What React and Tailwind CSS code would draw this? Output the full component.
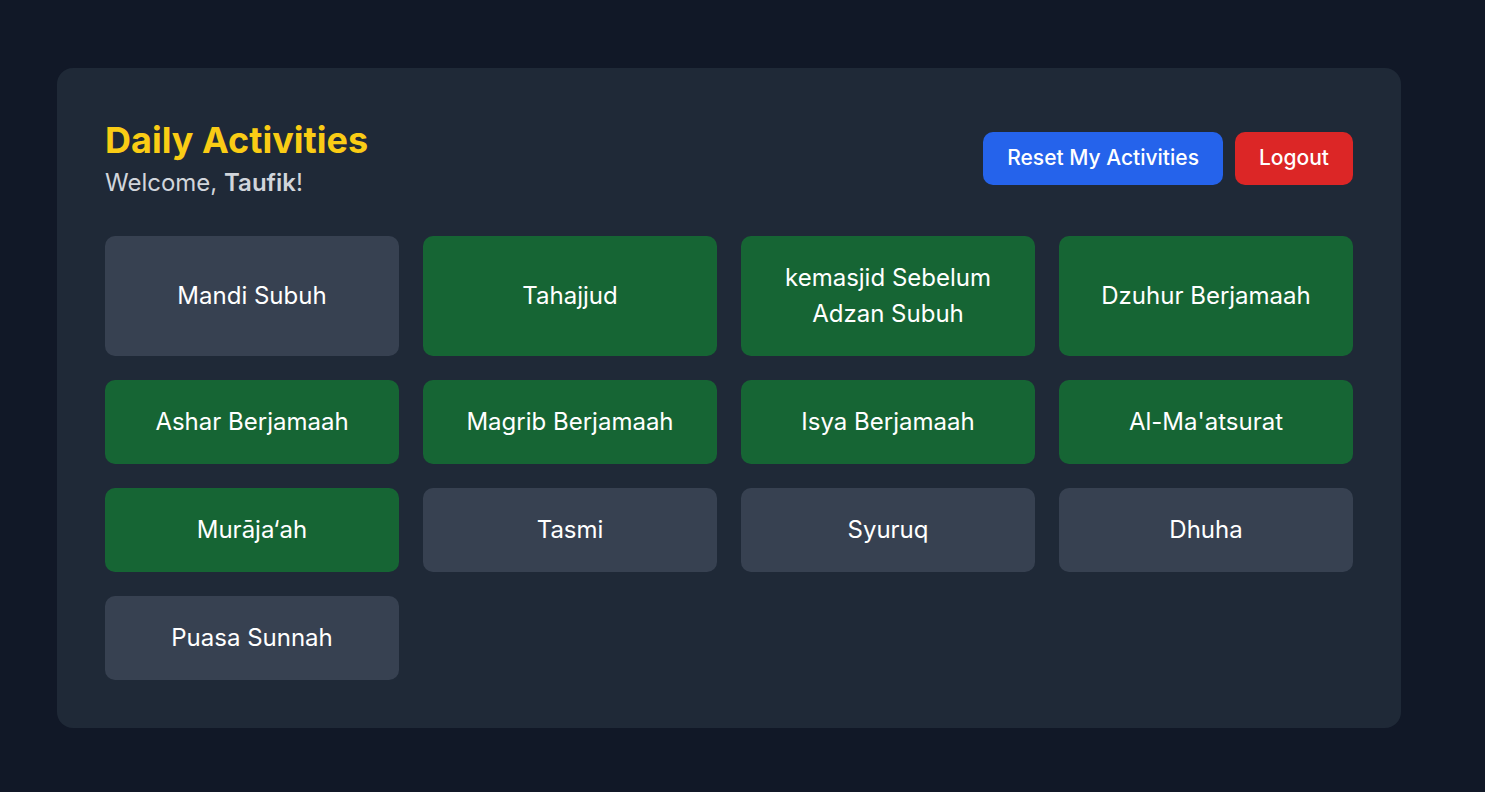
import React, { useState } from "react";

const ACTIVITIES = [
    { name: "Mandi Subuh", done: false },
    { name: "Tahajjud", done: true },
    { name: "kemasjid Sebelum Adzan Subuh", done: true },
    { name: "Dzuhur Berjamaah", done: true },
    { name: "Ashar Berjamaah", done: true },
    { name: "Magrib Berjamaah", done: true },
    { name: "Isya Berjamaah", done: true },
    { name: "Al-Ma'atsurat", done: true },
    { name: "Murāja‘ah", done: true },
    { name: "Tasmi", done: false },
    { name: "Syuruq", done: false },
    { name: "Dhuha", done: false },
    { name: "Puasa Sunnah", done: false },
];

export default function App() {
    const [items, setItems] = useState(ACTIVITIES);

    const toggle = (i) => {
        setItems(prev => prev.map((it, idx) => idx === i ? { ...it, done: !it.done } : it));
    };

    return (
        <div className="min-h-screen bg-[#111827] pl-[57px] pt-[68px] pb-16 font-['Inter','Liberation_Sans',sans-serif]">
            <div className="w-[1344px] bg-[#1f2937] rounded-2xl p-12">
                {/* header */}
                <div className="flex items-center justify-between mb-[36px]">
                    <div className="mt-[3px]">
                        <h1 className="text-[36px] leading-[43px] font-bold text-[#facc15]">Daily Activities</h1>
                        <p className="mt-1 text-[24px] leading-[34px] text-[#d1d5db]">
                            Welcome, <span className="font-semibold">Taufik</span>!
                        </p>
                    </div>
                    <div className="flex gap-3">
                        <button
                            onClick={() => setItems(prev => prev.map(it => ({ ...it, done: false })))}
                            className="h-[53px] px-6 rounded-[10px] bg-[#2563eb] text-white text-[21px] font-medium"
                        >
                            Reset My Activities
                        </button>
                        <button className="h-[53px] px-6 rounded-[10px] bg-[#dc2626] text-white text-[21px] font-medium">
                            Logout
                        </button>
                    </div>
                </div>

                {/* activities */}
                <div className="grid grid-cols-4 gap-6">
                    {items.map((it, i) => (
                        <button
                            key={it.name}
                            onClick={() => toggle(i)}
                            className={`flex items-center justify-center p-6 rounded-[10px] text-white text-[24px] leading-[36px] text-center ${it.done ? "bg-[#166534]" : "bg-[#374151]"}`}
                        >
                            <span className="max-w-[220px]">{it.name}</span>
                        </button>
                    ))}
                </div>
            </div>
        </div>
    );
}
